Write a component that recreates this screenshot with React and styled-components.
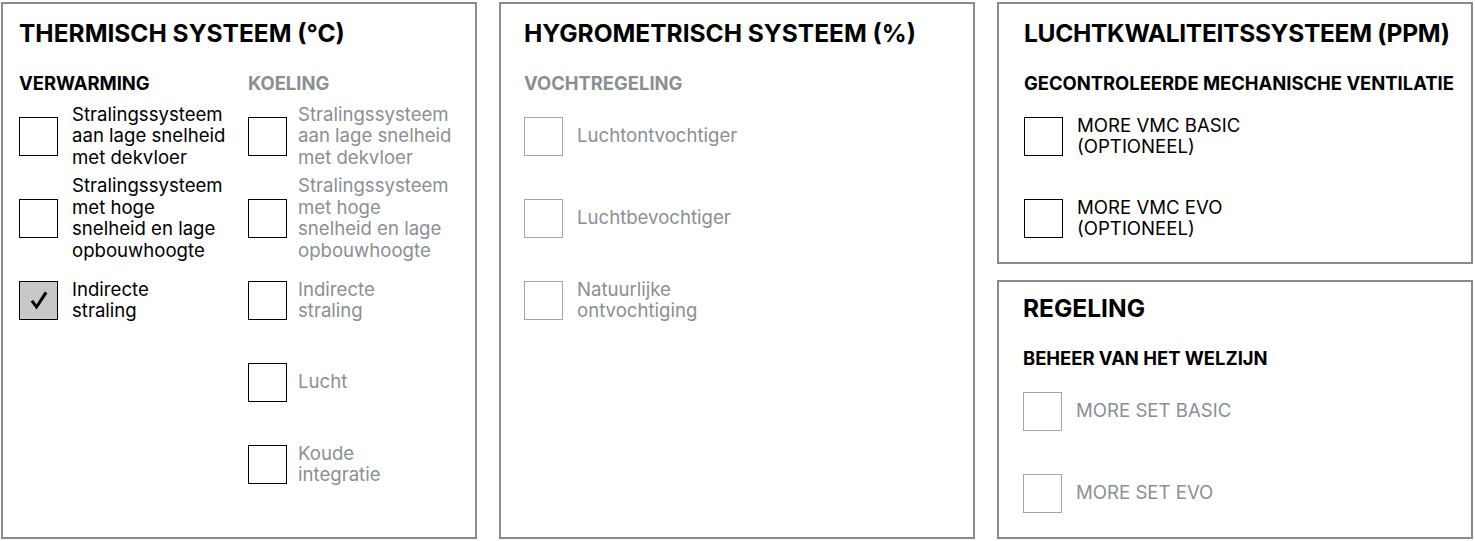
import React from 'react';
import styled, {createGlobalStyle} from 'styled-components';

const GlobalStyle = createGlobalStyle`
  body {
    margin: 0;
    background: #fff;
    font-family: Inter, "Liberation Sans", Arial, sans-serif;
    -webkit-font-smoothing: antialiased;
  }
`;

const Page = styled.div`
  display: grid;
  grid-template-columns: repeat(3, 476px);
  column-gap: 22px;
  padding: 2px 2px 2px 1px;
  height: 541px;
  box-sizing: border-box;
`;

const Stack = styled.div`
  display: flex;
  flex-direction: column;
  gap: 16px;
  min-height: 0;
`;

const Panel = styled.section`
  flex: 1;
  border: 2px solid #888a8c;
  padding: ${({$top}) => $top}px 8px 0 ${({$left}) => $left}px;
  box-sizing: border-box;
  min-height: 0;
  overflow: hidden;
`;

const Title = styled.h2`
  margin: 0;
  font-size: 24.5px;
  line-height: 28px;
  font-weight: 700;
  color: #000;
  white-space: nowrap;
  letter-spacing: ${({$tight}) => ($tight ? '-0.3px' : '0')};
`;

const Heading = styled.h3`
  margin: 25px 0 1px;
  font-size: 18.4px;
  line-height: 22px;
  font-weight: 700;
  color: ${({$muted}) => ($muted ? '#8a8f94' : '#000')};
  white-space: nowrap;
`;

const Columns = styled.div`
  display: grid;
  grid-template-columns: 229px 1fr;
`;

const Row = styled.div`
  display: flex;
  align-items: center;
  height: 82px;
  gap: ${({$gap}) => $gap || 14}px;
`;

const Box = styled.div`
  flex: none;
  width: 39px;
  height: 39px;
  box-sizing: border-box;
  border: 1px solid ${({$soft}) => ($soft ? '#a3a5a7' : '#000')};
  background: ${({$checked}) => ($checked ? '#c8c8c8' : '#fff')};
  display: flex;
  align-items: center;
  justify-content: center;
`;

const Label = styled.span`
  font-size: 18.6px;
  line-height: 21.5px;
  color: ${({$muted}) => ($muted ? '#8a8f94' : '#000')};
  white-space: nowrap;
`;

const Check = () => (
  <svg width="18" height="19" viewBox="0 0 18 19" style={{marginLeft: 1}}>
    <path d="M0.6 10.6 L3.3 9 L6.4 13.6 L14.8 0.6 L17.4 2.2 L6.6 18.6 Z" fill="#000" />
  </svg>
);

const Option = ({lines, muted, soft, checked, gap}) => (
  <Row $gap={gap}>
    <Box $soft={soft} $checked={checked}>{checked && <Check />}</Box>
    <Label $muted={muted}>
      {lines.map((l, i) => (
        <React.Fragment key={i}>
          {i > 0 && <br />}
          {l}
        </React.Fragment>
      ))}
    </Label>
  </Row>
);

const heating = [
  {lines: ['Stralingssysteem', 'aan lage snelheid', 'met dekvloer']},
  {lines: ['Stralingssysteem', 'met hoge', 'snelheid en lage', 'opbouwhoogte']},
  {lines: ['Indirecte', 'straling'], checked: true},
];

const cooling = [
  {lines: ['Stralingssysteem', 'aan lage snelheid', 'met dekvloer']},
  {lines: ['Stralingssysteem', 'met hoge', 'snelheid en lage', 'opbouwhoogte']},
  {lines: ['Indirecte', 'straling']},
  {lines: ['Lucht']},
  {lines: ['Koude', 'integratie']},
];

const humidity = [
  {lines: ['Luchtontvochtiger']},
  {lines: ['Luchtbevochtiger']},
  {lines: ['Natuurlijke', 'ontvochtiging']},
];

export default function App() {
  return (
    <>
      <GlobalStyle />
      <Page>
        <Panel $top={15} $left={16}>
          <Title>THERMISCH SYSTEEM (°C)</Title>
          <Columns>
            <div>
              <Heading>VERWARMING</Heading>
              {heating.map((o, i) => (
                <Option key={i} {...o} />
              ))}
            </div>
            <div>
              <Heading $muted>KOELING</Heading>
              {cooling.map((o, i) => (
                <Option key={i} {...o} muted gap={11} />
              ))}
            </div>
          </Columns>
        </Panel>

        <Panel $top={15} $left={23}>
          <Title>HYGROMETRISCH SYSTEEM (%)</Title>
          <Heading $muted>VOCHTREGELING</Heading>
          {humidity.map((o, i) => (
            <Option key={i} {...o} muted soft />
          ))}
        </Panel>

        <Stack>
          <Panel $top={15} $left={25}>
            <Title $tight>LUCHTKWALITEITSSYSTEEM (PPM)</Title>
            <Heading>GECONTROLEERDE MECHANISCHE VENTILATIE</Heading>
            <Option lines={['MORE VMC BASIC', '(OPTIONEEL)']} />
            <Option lines={['MORE VMC EVO', '(OPTIONEEL)']} />
          </Panel>
          <Panel $top={12} $left={24}>
            <Title>REGELING</Title>
            <Heading>BEHEER VAN HET WELZIJN</Heading>
            <Option lines={['MORE SET BASIC']} muted soft />
            <Option lines={['MORE SET EVO']} muted soft />
          </Panel>
        </Stack>
      </Page>
    </>
  );
}
